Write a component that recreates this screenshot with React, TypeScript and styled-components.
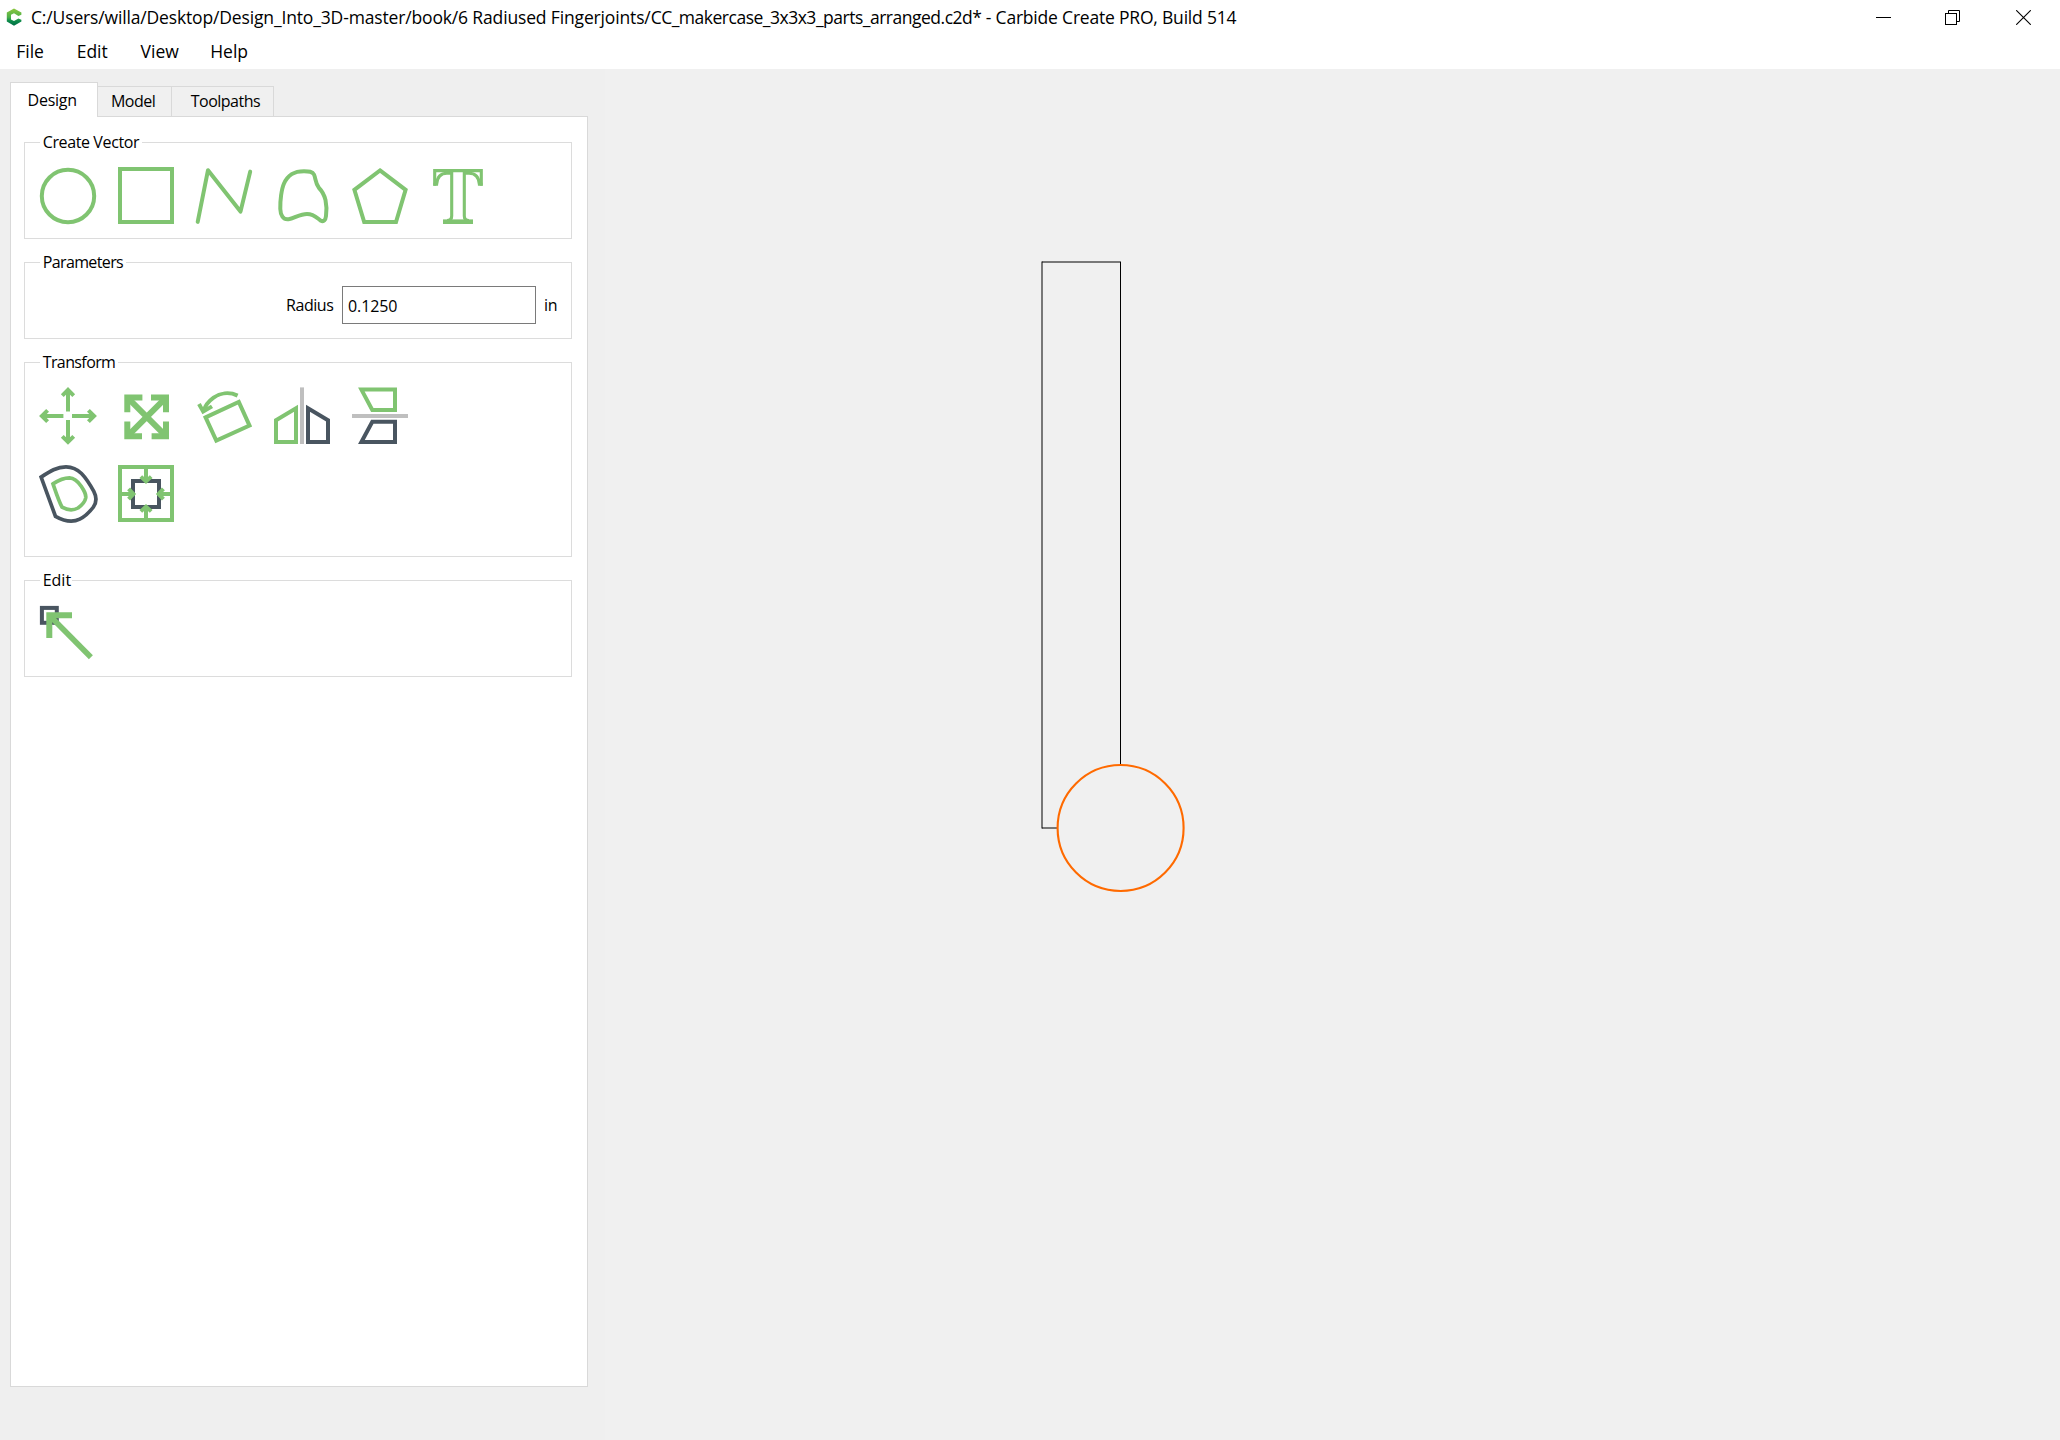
import React from "react";
import styled, { createGlobalStyle } from "styled-components";

const GREEN = "#80c471";
const DARK = "#495560";
const GREY = "#bfbfbf";

const GlobalStyle = createGlobalStyle`
  * { box-sizing: border-box; }
  body {
    margin: 0;
    background: #f0f0f0;
    color: #000;
    font-family: "Open Sans", "Noto Sans", sans-serif;
  }
`;

const Window = styled.div`
  display: flex;
  flex-direction: column;
  width: 2060px;
  height: 1440px;
  overflow: hidden;
  background: #f0f0f0;
`;

const TitleBar = styled.header`
  display: flex;
  align-items: center;
  height: 34px;
  padding-left: 6px;
  background: #fff;
`;

const Title = styled.span`
  flex: 1;
  margin-left: 9px;
  font-size: 17.5px;
  line-height: 34px;
  white-space: pre;
`;

const TitlePart = styled.span<{ $spacing: number }>`
  letter-spacing: ${(p) => p.$spacing}px;
`;

const WindowButtons = styled.div`
  display: grid;
  grid-template-columns: 69px 71px 15px;
  padding-right: 29px;
`;

const MenuBar = styled.nav`
  display: flex;
  height: 35px;
  padding-left: 16.2px;
  background: #fff;
`;

const MenuItem = styled.span<{ $width: number }>`
  width: ${(p) => p.$width}px;
  font-size: 17.5px;
  line-height: 35px;
`;

const Workspace = styled.div`
  display: flex;
  flex: 1;
`;

const Sidebar = styled.aside`
  display: flex;
  flex-direction: column;
  width: 605px;
  padding: 13px 0 0 10px;
  background: #efefef;
`;

const TabStrip = styled.div`
  display: flex;
  align-items: flex-end;
  height: 34px;
`;

const Tab = styled.div<{ $width: number; $pad: number; $spacing: number; $active?: boolean }>`
  width: ${(p) => p.$width}px;
  height: ${(p) => (p.$active ? 35 : 30)}px;
  margin-bottom: ${(p) => (p.$active ? -1 : 0)}px;
  padding-left: ${(p) => p.$pad}px;
  border: solid #d9d9d9;
  border-width: ${(p) => (p.$active ? "1px 1px 0 1px" : "1px 1px 0 0")};
  background: ${(p) => (p.$active ? "#fff" : "#f0f0f0")};
  font-size: 16px;
  line-height: ${(p) => (p.$active ? 34 : 29)}px;
  letter-spacing: ${(p) => p.$spacing}px;
  z-index: ${(p) => (p.$active ? 1 : 0)};
`;

const Pane = styled.section`
  display: flex;
  flex-direction: column;
  gap: 23px;
  width: 578px;
  height: 1271px;
  padding: 25px 15px 0 13px;
  border: 1px solid #d9d9d9;
  background: #fff;
`;

const Group = styled.div<{ $height: number }>`
  width: 548px;
  height: ${(p) => p.$height}px;
  border: 1px solid #dcdcdc;
`;

const Legend = styled.div<{ $width: number; $spacing: number }>`
  width: ${(p) => p.$width}px;
  height: 20px;
  margin: -11px 0 0 15px;
  padding-left: 2.7px;
  background: #fff;
  font-size: 16px;
  line-height: 20px;
  letter-spacing: ${(p) => p.$spacing}px;
  white-space: pre;
`;

const IconGrid = styled.div`
  display: grid;
  grid-template-columns: repeat(6, 56px);
  gap: 21px 22px;
  margin: 15px 0 0 15px;
`;

const IconSvg = styled.svg<{ $stroke?: number }>`
  display: block;
  width: 56px;
  height: 57px;
  overflow: visible;
  fill: none;
  stroke: ${GREEN};
  stroke-width: ${(p) => p.$stroke ?? 4};
`;

const FieldRow = styled.div`
  display: flex;
  justify-content: flex-end;
  align-items: center;
  height: 38px;
  margin-top: 14px;
`;

const FieldLabel = styled.label`
  margin-right: 8.6px;
  font-size: 16px;
  letter-spacing: -0.45px;
`;

const FieldInput = styled.input`
  width: 194px;
  height: 38px;
  padding: 2px 5px 0;
  border: 1px solid #7a7a7a;
  border-radius: 0;
  outline: none;
  background: #fff;
  color: #000;
  font: 16px "Open Sans", "Noto Sans", sans-serif;
  letter-spacing: -0.1px;
`;

const Unit = styled.span`
  width: 35px;
  padding-left: 8px;
  font-size: 16px;
  letter-spacing: -0.3px;
`;

const Canvas = styled.main`
  flex: 1;
  background: #f0f0f0;
`;

const Drawing = styled.svg`
  display: block;
`;

const Logo = () => (
  <svg width="16" height="18" viewBox="0 0 16 18">
    <defs>
      <linearGradient id="logo" x1="0" y1="0" x2="0" y2="1">
        <stop offset="0" stopColor="#8cc63f" />
        <stop offset="0.5" stopColor="#4db04a" />
        <stop offset="0.72" stopColor="#0b8a4b" />
        <stop offset="1" stopColor="#006b45" />
      </linearGradient>
    </defs>
    <path
      d="M8 0.6 L15.4 4.6 V6.8 L12.4 8 L8 5.2 L5 6.8 V11.4 L8 13 L12.4 10.4 L15.4 11.8 V13.6 L8 17.8 L0.8 13.6 V4.6 Z"
      fill="url(#logo)"
    />
  </svg>
);

const MinimizeIcon = () => (
  <svg width="15" height="15" viewBox="0 0 15 15" shapeRendering="crispEdges">
    <rect y="7" width="15" height="1" />
  </svg>
);

const RestoreIcon = () => (
  <svg width="15" height="15" viewBox="0 0 15 15" fill="none" stroke="#000">
    <path d="M3.5 3.5 V0.5 H14.5 V11.5 H11.5" />
    <rect x="0.5" y="3.5" width="11" height="11" />
  </svg>
);

const CloseIcon = () => (
  <svg width="15" height="15" viewBox="0 0 15 15" stroke="#000" strokeWidth="1.1">
    <path d="M0.2 0.2 L14.8 14.8 M14.8 0.2 L0.2 14.8" />
  </svg>
);

const CircleIcon = () => (
  <IconSvg>
    <circle cx="28" cy="29" r="26.2" />
  </IconSvg>
);

const SquareIcon = () => (
  <IconSvg>
    <rect x="2" y="2" width="52" height="53" />
  </IconSvg>
);

const PolylineIcon = () => (
  <IconSvg strokeLinecap="round" strokeLinejoin="round">
    <path d="M1.7 54.9 L12 3.2 L44.5 44.6 L54.2 4.6" />
  </IconSvg>
);

const CurveIcon = () => (
  <IconSvg>
    <path d="M30 4.2 C35 4.2 38.5 4.3 40 7.5 C42 12 41 16 45 21 C49 25 50 27 51.5 33 C52.8 39 52.8 43 52 49 C51.5 53 50 55.3 46.5 53.5 C43 51 40 47 33 47 C26 47 20 51.5 14.5 52.3 C9 53 6.5 48 6.3 42 C6 34 7.5 22 10 16.5 C14 7.5 20 4.2 30 4.2 Z" />
  </IconSvg>
);

const PolygonIcon = () => (
  <IconSvg>
    <path d="M28 3.4 L53.6 22.8 L44 55 H12.2 L2.4 22.8 Z" />
  </IconSvg>
);

const TextIcon = () => (
  <IconSvg $stroke={3.1}>
    <path d="M4.7 18.8 V3.6 H51.3 V18.8" />
    <path d="M3.4 17.3 H6.6 C7.2 10 11 6.3 17 6.3 H21.7 V49 C21.7 52 20 53.6 17 53.6" />
    <path d="M52.6 17.3 H49.4 C48.8 10 45 6.3 39 6.3 H34.3 V49 C34.3 52 36 53.6 39 53.6" />
    <path d="M13 54.7 H43" strokeWidth="4.6" />
  </IconSvg>
);

const MoveIcon = () => (
  <IconSvg>
    <path d="M28 2.5 V24.4 M28 33 V55 M1.5 29 H23.4 M32 29 H54.5" />
    <path d="M22.3 8.6 L28 2.9 L33.7 8.6 M22.3 49.4 L28 55 L33.7 49.4 M7.6 23.3 L1.9 29 L7.6 34.7 M48.4 23.3 L54.1 29 L48.4 34.7" />
  </IconSvg>
);

const ScaleIcon = () => (
  <IconSvg $stroke={6}>
    <path d="M9.3 25.2 V10.4 H24.4 M33 10.4 H48 V25.2 M48 34.6 V49.3 H33.6 M24 49.3 H9.3 V34.6" />
    <path d="M10.5 11.6 L47 48.1 M47 11.6 L10.5 48.1" />
  </IconSvg>
);

const RotateIcon = () => (
  <IconSvg>
    <path d="M9.6 30.4 L42.8 15 L53.5 38.6 L20.3 53.6 Z" />
    <path d="M41.6 8.6 C33 4.6 24 6.2 17.6 10.6 C12 14.6 9 19 7.6 24" />
    <path d="M3 17 L7.2 24.6 L16 19.4" />
  </IconSvg>
);

const MirrorIcon = () => (
  <IconSvg>
    <path d="M2 33.2 L22 21.3 V55 H2 Z" />
    <path d="M28 0.4 V57" stroke={GREY} />
    <path d="M54 33.2 L34 21.3 V55 H54 Z" stroke={DARK} />
  </IconSvg>
);

const FlipIcon = () => (
  <IconSvg>
    <path d="M9.4 2.6 H43 V23 H20.3 Z" />
    <path d="M0 29 H56" stroke={GREY} />
    <path d="M9.4 55 H43 V34.8 H20.3 Z" stroke={DARK} />
  </IconSvg>
);

const OffsetIcon = () => (
  <IconSvg $stroke={3.7}>
    <path
      d="M1.1 12.1 C10 6.2 17 1.8 26 1.8 C32.5 1.9 37.5 4.5 41.5 8.5 C45.5 12.6 50 19.5 53.8 26.3 C57 32.5 56.9 37 53.4 42 C49.8 46.8 44.8 51.7 39.7 54.2 C32.5 57.8 24 56.2 15.5 51.4 Z"
      stroke={DARK}
    />
    <path d="M13 18.9 C19 14.8 24 12.8 29.5 12.8 C35 13 38 16.5 41 21 C44.3 26 46.3 29 45.7 33 C45 37 41.5 40.5 38 43 C32 46.4 27 45 22 42.2 C18.5 35.5 15.8 27 13 18.9 Z" />
  </IconSvg>
);

const AlignIcon = () => (
  <IconSvg>
    <rect x="2" y="2" width="52" height="53" />
    <rect x="15" y="16" width="26" height="26" stroke={DARK} />
    <path d="M28 3 V16 M28 42 V54 M3 29 H16 M40 29 H53" />
    <path d="M22.8 11.6 L28 16.4 L33.2 11.6 M22.8 46.4 L28 41.6 L33.2 46.4 M10.6 23.8 L15.4 29 L10.6 34.2 M45.4 23.8 L40.6 29 L45.4 34.2" />
  </IconSvg>
);

const NodeEditIcon = () => (
  <IconSvg>
    <rect x="1.9" y="2.9" width="14.9" height="14.9" stroke={DARK} />
    <path d="M9.3 33 V10.3 H32" strokeWidth="6" style={{ strokeWidth: 6 }} />
    <path d="M9.5 10.5 L50.9 52.3" style={{ strokeWidth: 5.6 }} />
  </IconSvg>
);

export default function App() {
  return (
    <Window>
      <GlobalStyle />
      <TitleBar>
        <Logo />
        <Title>
          <TitlePart $spacing={-0.15}>C:/Users/willa/Desktop/Design_Into_3D-master/book/6 Radiused Fingerjoints/</TitlePart>
          <TitlePart $spacing={-0.49}>CC_makercase_3x3x3_parts_arranged.c2d*</TitlePart>
          <TitlePart $spacing={-0.2}> - Carbide Create PRO, Build 514</TitlePart>
        </Title>
        <WindowButtons>
          <MinimizeIcon />
          <RestoreIcon />
          <CloseIcon />
        </WindowButtons>
      </TitleBar>
      <MenuBar>
        <MenuItem $width={60.5}>File</MenuItem>
        <MenuItem $width={63.9}>Edit</MenuItem>
        <MenuItem $width={69.6}>View</MenuItem>
        <MenuItem $width={60}>Help</MenuItem>
      </MenuBar>
      <Workspace>
        <Sidebar>
          <TabStrip>
            <Tab $width={88} $pad={16.6} $spacing={-0.25} $active>Design</Tab>
            <Tab $width={74} $pad={12.9} $spacing={-0.5}>Model</Tab>
            <Tab $width={102} $pad={18.8} $spacing={-0.52}>Toolpaths</Tab>
          </TabStrip>
          <Pane>
            <Group $height={97}>
              <Legend $width={102} $spacing={-0.38}>Create Vector</Legend>
              <IconGrid>
                <CircleIcon />
                <SquareIcon />
                <PolylineIcon />
                <CurveIcon />
                <PolygonIcon />
                <TextIcon />
              </IconGrid>
            </Group>
            <Group $height={77}>
              <Legend $width={86} $spacing={-0.62}>Parameters</Legend>
              <FieldRow>
                <FieldLabel htmlFor="radius">Radius</FieldLabel>
                <FieldInput id="radius" defaultValue="0.1250" />
                <Unit>in</Unit>
              </FieldRow>
            </Group>
            <Group $height={195}>
              <Legend $width={78} $spacing={-0.6}>Transform</Legend>
              <IconGrid>
                <MoveIcon />
                <ScaleIcon />
                <RotateIcon />
                <MirrorIcon />
                <FlipIcon />
                <span />
                <OffsetIcon />
                <AlignIcon />
              </IconGrid>
            </Group>
            <Group $height={97}>
              <Legend $width={32} $spacing={0}>Edit</Legend>
              <IconGrid>
                <NodeEditIcon />
              </IconGrid>
            </Group>
          </Pane>
        </Sidebar>
        <Canvas>
          <Drawing width="1455" height="1371" viewBox="605 69 1455 1371" fill="none">
            <path d="M1042 828.5 V261.5" stroke="#000" />
            <path d="M1042 262 H1121" stroke="#000" />
            <path d="M1120.5 262 V765" stroke="#000" />
            <path d="M1042 828 H1058" stroke="#000" />
            <circle cx="1120.6" cy="828" r="63" stroke="#ff6a00" strokeWidth="2.1" />
          </Drawing>
        </Canvas>
      </Workspace>
    </Window>
  );
}
